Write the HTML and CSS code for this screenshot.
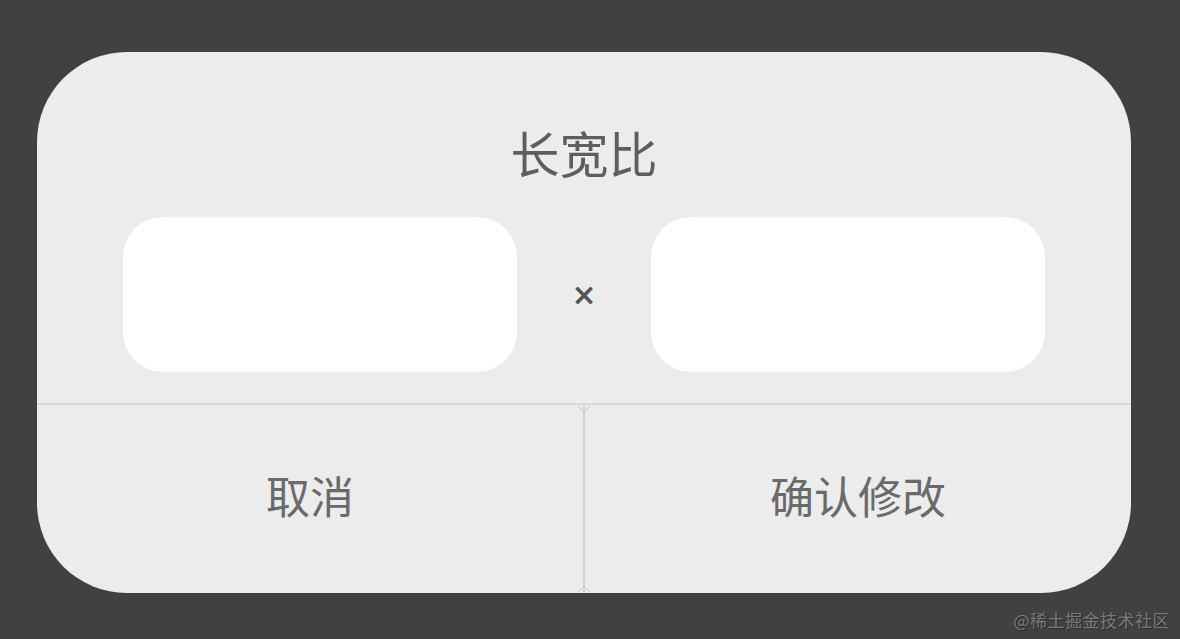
FILE: index.html
```html
<!DOCTYPE html>
<html lang="zh">
<head>
<meta charset="utf-8">
<link rel="stylesheet" href="styles.css">
</head>
<body>
<div class="stage">
  <div class="dialog">
    <div class="title">长宽比</div>
    <div class="inputs">
      <div class="field"></div>
      <div class="times">×</div>
      <div class="field"></div>
    </div>
    <div class="actions">
      <div class="btn">取消</div>
      <div class="sep">
        <svg class="tick top" width="14" height="10" viewBox="0 0 14 10"><path d="M1 1 L7 7 L13 1" fill="none" stroke="#c4c4c4" stroke-width="1"/></svg>
        <svg class="tick bottom" width="14" height="10" viewBox="0 0 14 10"><path d="M1 9 L7 3 L13 9" fill="none" stroke="#c4c4c4" stroke-width="1"/></svg>
      </div>
      <div class="btn">确认修改</div>
    </div>
  </div>
  <div class="watermark">@稀土掘金技术社区</div>
</div>
</body>
</html>
```
FILE: styles.css
```css
html, body {
  margin: 0;
  padding: 0;
  background: #414141;
  width: 1180px;
  height: 639px;
  overflow: hidden;
  font-family: "Noto Sans CJK SC", "Noto Sans", sans-serif;
}
.stage {
  position: relative;
  width: 1180px;
  height: 639px;
  padding: 52px 0 0 37px;
  box-sizing: border-box;
}
.dialog {
  width: 1094px;
  height: 541px;
  background: #ececec;
  border-radius: 90px;
  display: flex;
  flex-direction: column;
  overflow: hidden;
}
.title {
  padding-top: 74px;
  height: 52px;
  line-height: 52px;
  text-align: center;
  font-size: 49px;
  color: #5e5e5e;
  margin-bottom: 39px;
}
.inputs {
  display: flex;
  align-items: center;
  padding: 0 86px;
  height: 155px;
}
.field {
  width: 394px;
  height: 155px;
  background: #ffffff;
  border-radius: 40px;
}
.times {
  flex: 1;
  text-align: center;
  font-size: 30px;
  font-weight: bold;
  color: #555;
  font-family: "DejaVu Sans", sans-serif;
  line-height: 1;
}
.actions {
  margin-top: 31px;
  border-top: 2px solid #d8d8d8;
  flex: 1;
  display: flex;
}
.btn {
  flex: 1;
  display: flex;
  align-items: center;
  justify-content: center;
  font-size: 44px;
  color: #6a6a6a;
  padding-bottom: 8px;
}
.sep {
  position: relative;
  width: 2px;
  background: #d2d2d2;
}
.tick {
  position: absolute;
  left: -6px;
}
.tick.top { top: 0; }
.tick.bottom { bottom: 0; }
.watermark {
  position: absolute;
  right: 10px;
  top: 607px;
  font-size: 17px;
  color: #7a7a7a;
  text-shadow: 1px 1px 0 #2c2c2c;
  letter-spacing: 0.5px;
}
```
